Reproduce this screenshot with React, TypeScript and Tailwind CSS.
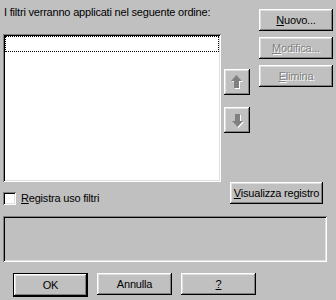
import type { ReactNode } from "react";

const raised =
  "shadow-[inset_-1px_-1px_0_#000,inset_1px_1px_0_#fff,inset_-2px_-2px_0_#808080,inset_2px_2px_0_#dfdfdf]";
const sunken =
  "shadow-[inset_1px_1px_0_#808080,inset_-1px_-1px_0_#fff,inset_2px_2px_0_#000,inset_-2px_-2px_0_#dfdfdf]";

function Btn({ children, disabled, w, cls = "" }: { children: ReactNode; disabled?: boolean; w: string; cls?: string }) {
  return (
    <button
      className={`${w} h-[22px] bg-[#c0c0c0] ${raised} flex items-center justify-center leading-none ${
        disabled ? "text-[#808080] [text-shadow:1px_1px_0_#fff]" : "text-black"
      } ${cls}`}
    >
      {children}
    </button>
  );
}

function Arrow({ down }: { down?: boolean }) {
  const pts = "5.5,0 11,6 8,6 8,13 3,13 3,6 0,6";
  return (
    <button className={`w-[26px] h-[26px] bg-[#c0c0c0] ${raised} flex items-center justify-center`}>
      <svg width="13" height="15" viewBox="0 0 13 15" className={down ? "rotate-180" : ""}>
        <polygon points={pts} fill="#fff" transform={down ? "translate(0,0)" : "translate(1,1)"} />
        <polygon points={pts} fill="#808080" transform={down ? "translate(1,1)" : "translate(0,0)"} />
      </svg>
    </button>
  );
}

export default function App() {
  return (
    <div className="w-[336px] h-[300px] bg-[#c0c0c0] overflow-hidden text-black text-[11px] tracking-[-0.2px] font-['Liberation_Sans',Arial,sans-serif]">
      <div className="flex pl-[3px] h-[182px]">
        <div className="w-[218px] flex flex-col">
          <div className="h-[34px] pt-[6px] pl-[1px] leading-[13px]">I filtri verranno applicati nel seguente ordine:</div>
          <div className={`h-[148px] bg-white ${sunken} p-[2px]`}>
            <div className="h-[16px] border border-dotted border-black" />
          </div>
        </div>
        <div className="ml-[3px] pt-[69px] flex flex-col gap-[12px]">
          <Arrow />
          <Arrow down />
        </div>
        <div className="ml-[9px] pt-[9px] flex flex-col gap-[6px]">
          <Btn w="w-[74px]">
            <span><u>N</u>uovo...</span>
          </Btn>
          <Btn w="w-[74px]" disabled>
            <span><u>M</u>odifica...</span>
          </Btn>
          <Btn w="w-[74px]" disabled>
            <span><u>E</u>limina</span>
          </Btn>
        </div>
      </div>

      <div className="flex h-[34px] pl-[3px] pr-[13px]">
        <div className="flex items-start pt-[10px] gap-[5px]">
          <div className={`w-[13px] h-[13px] bg-white ${sunken}`} />
          <span className="leading-[13px]"><u>R</u>egistra uso filtri</span>
        </div>
        <Btn w="w-[93px]" cls="ml-auto">
          <span><u>V</u>isualizza registro</span>
        </Btn>
      </div>

      <div className={`ml-[3px] w-[324px] h-[46px] ${sunken}`} />

      <div className="flex gap-[9px] pl-[13px] mt-[11px]">
        <div className="border border-black">
          <Btn w="w-[73px]" cls="h-[20px]">OK</Btn>
        </div>
        <Btn w="w-[75px]">Annulla</Btn>
        <Btn w="w-[75px]">
          <u>?</u>
        </Btn>
      </div>
    </div>
  );
}
